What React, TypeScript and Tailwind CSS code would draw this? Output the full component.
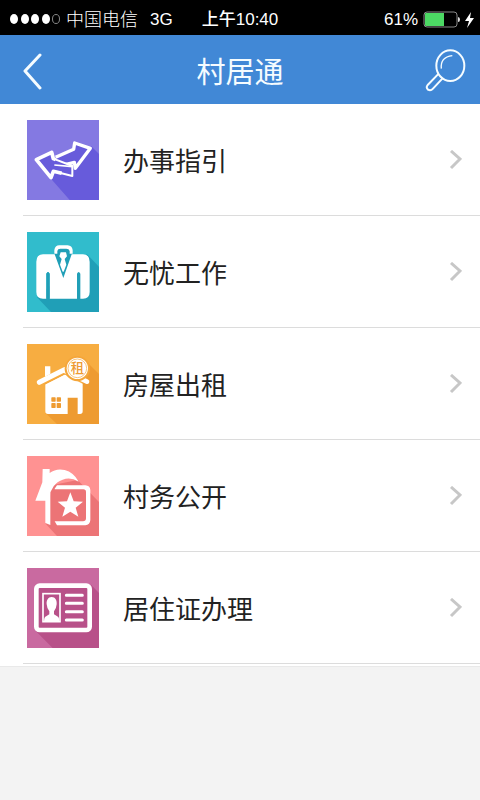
import type { ReactNode } from "react";

type Item = { label: string; art: ReactNode };

const items: Item[] = [
  {
    label: "办事指引",
    art: (
      <>
        <rect x="36" y="30" width="216" height="240" fill="#8479e2" />
        <path d="M228 108L252 132V270H164L106 204L66 152L150 190Z" fill="#675bdb" />
        <path
          d="M122 142L176 118L179 99L226 115L181 175L178 157L120 171"
          fill="#675bdb"
          stroke="#fff"
          strokeWidth="10"
          strokeLinejoin="round"
        />
        <path d="M64 149L110 127L115 146L172 168V198L116 184L108 203Z" fill="#675bdb" stroke="#fff" strokeWidth="6" strokeLinejoin="round" />
        <path
          d="M122 149L115 146L110 127L64 149L108 203L115 184L140 190"
          fill="none"
          stroke="#fff"
          strokeWidth="11"
          strokeLinejoin="round"
        />
        <path d="M118 165L172 170" stroke="#fff" strokeWidth="5" />
      </>
    ),
  },
  {
    label: "无忧工作",
    art: (
      <>
        <rect x="36" y="30" width="216" height="240" fill="#31bccc" />
        <path d="M216 97L252 134V270H108L66 226Z" fill="#209fb7" />
        <path d="M117 98L126 74H165L173 98L145 170Z" fill="#209fb7" />
        <path
          d="M84 97Q64 98 64 119V210Q64 230 84 230H94V155Q99 145 104 155V230H186V155Q191 145 196 155V230H204Q224 230 224 210V119Q224 98 204 97H170L145 168L119 97Z"
          fill="#fff"
        />
        <path d="M94 155Q99 145 104 155V230H94Z" fill="#209fb7" />
        <path d="M118 95V84Q120 70 133 70H158Q171 71 173 84V95H164V87Q162 80 154 80H136Q128 80 127 87V95Z" fill="#fff" />
        <path d="M137 91H153L156 103L149 111L154 128L146 149H143L135 128L140 111L133 103Z" fill="#fff" />
      </>
    ),
  },
  {
    label: "房屋出租",
    art: (
      <>
        <rect x="36" y="30" width="216" height="240" fill="#f7ad41" />
        <path d="M212 80L252 120V270H126L92 238L202 150Z" fill="#ee9b31" />
        <path
          d="M91 151L146 123Q151 121 156 125L203 149V232Q203 240 195 240H188V191H158V240H99Q91 240 91 232Z"
          fill="#fff"
        />
        <path d="M90 128V97H106V120Z" fill="#fff" />
        <path d="M73 145L148 107" stroke="#fff" strokeWidth="15" strokeLinecap="round" />
        <path d="M148 110L216 143" stroke="#fff" strokeWidth="14" strokeLinecap="round" />
        <path d="M88 151L149 120" stroke="#f4a63b" strokeWidth="3" />
        <g fill="#ee9b31">
          <rect x="109" y="190" width="13" height="13" rx="2" />
          <rect x="125" y="190" width="13" height="13" rx="2" />
          <rect x="109" y="207" width="13" height="15" rx="2" />
          <rect x="125" y="207" width="13" height="15" rx="2" />
        </g>
        <circle cx="187" cy="104" r="38" fill="#f4a63b" />
        <circle cx="187" cy="103" r="32" fill="#fff" />
        <circle cx="187" cy="103" r="28" fill="#fff" stroke="#f4a63b" strokeWidth="2" />
        <text
          x="187"
          y="118"
          textAnchor="middle"
          fill="#ee9b31"
          className="font-['Noto_Sans_CJK_SC',sans-serif] text-[40px] font-medium"
        >
          租
        </text>
      </>
    ),
  },
  {
    label: "村务公开",
    art: (
      <>
        <rect x="36" y="30" width="216" height="240" fill="#ff9292" />
        <path d="M188 102L252 168V270H126L92 233L110 118Z" fill="#ec7476" />
        <path
          d="M83 69H104V81Q124 66 149 72Q176 79 191 107Q166 91 143 101Q124 108 116 121L106 139V237L91 231V164H61L82 109Z"
          fill="#fff"
        />
        <path
          d="M119 128L126 118H211Q225 119 226 132V222Q225 237 211 238H126L119 226H204Q213 226 213 217V138Q213 130 205 130H119Z"
          fill="#fff"
        />
        <path d="M166 139L176 166L204 167L182 185L190 212L166 197L142 212L150 185L128 167L156 166Z" fill="#fff" />
      </>
    ),
  },
  {
    label: "居住证办理",
    art: (
      <>
        <rect x="36" y="30" width="216" height="240" fill="#c96aa0" />
        <path d="M228 80L252 105V270H113L63 220Z" fill="#b85189" />
        <rect x="64" y="83" width="160" height="133" rx="10" fill="#b85189" stroke="#fff" strokeWidth="14" />
        <rect x="84" y="107" width="51" height="84" fill="none" stroke="#fff" strokeWidth="5" />
        <path
          d="M110 117C121 117 126 127 125 139Q124 152 117 160V169L130 177Q133 180 133 191H87Q87 180 90 177L103 169V160Q96 152 95 139C94 127 99 117 110 117Z"
          fill="#fff"
        />
        <path d="M154 112H202M154 136H202M154 161H202M154 186H202" stroke="#fff" strokeWidth="9" strokeLinecap="round" />
      </>
    ),
  },
];

function StatusBar() {
  return (
    <div className="grid h-[35px] grid-cols-[1fr_auto_1fr] items-center bg-black px-2 pt-1 text-[17px] leading-5 text-white">
      <div className="flex items-center">
        <svg className="mr-1 h-3 w-[54px]" viewBox="0 0 54 12" aria-hidden="true">
          <g fill="#fff">
            <ellipse cx="6" cy="5" rx="4" ry="5" />
            <ellipse cx="17" cy="5" rx="4" ry="5" />
            <ellipse cx="27" cy="5" rx="4" ry="5" />
            <ellipse cx="38" cy="5" rx="4" ry="5" />
          </g>
          <ellipse cx="48" cy="5" rx="3.5" ry="4.5" fill="none" stroke="#888" />
        </svg>
        <span className="font-['Liberation_Sans','Noto_Sans_CJK_SC',sans-serif] text-[18px] font-light">中国电信</span>
        <span className="ml-3">3G</span>
      </div>
      <span className="font-medium">上午10:40</span>
      <div className="flex items-center justify-end">
        <span>61%</span>
        <svg className="-mr-1 ml-1 h-5 w-[54px]" viewBox="0 0 54 20" aria-hidden="true">
          <rect x="2" y="2" width="33" height="15" rx="3" fill="none" stroke="#8a8a8a" />
          <path d="M4 3H22V16H4Q3 16 3 15V4Q3 3 4 3Z" fill="#4cd964" />
          <path d="M36 7Q38 7 38 9.500Q38 12 36 12Z" fill="#ddd" />
          <path d="M49 2L43 11H47L45 18L52 8H48Z" fill="#fff" />
        </svg>
      </div>
    </div>
  );
}

export default function App() {
  return (
    <div className="min-h-screen bg-[#f3f3f3] font-['Liberation_Sans','Noto_Sans_CJK_SC',sans-serif]">
      <StatusBar />
      <header className="flex h-[69px] items-center justify-between bg-[#4188d6] text-[#f5fcff]">
        <button type="button" aria-label="返回" className="flex h-full w-16 items-center pl-5">
          <svg className="h-10 w-6" viewBox="0 0 24 40" fill="none" stroke="currentColor" strokeWidth="3" strokeLinecap="round" strokeLinejoin="round">
            <path d="M20 5L5 21L20 38" />
          </svg>
        </button>
        <h1 className="font-['Noto_Sans_CJK_SC',sans-serif] text-[29px] leading-10 font-normal">村居通</h1>
        <button type="button" aria-label="搜索" className="flex h-full w-16 items-center justify-end pr-[14px]">
          <svg className="h-[44px] w-[42px]" viewBox="550 145 126 132" fill="none" stroke="currentColor" strokeLinejoin="round">
            <ellipse cx="629" cy="198" rx="42" ry="46" strokeWidth="6" />
            <path d="M602 207Q598 173 635 168" strokeWidth="4" />
            <path d="M594 222L561 256Q555 264 562 270Q570 275 577 267L605 237" strokeWidth="6" />
          </svg>
        </button>
      </header>
      <main className="border-b border-[#e9e9e9] bg-white pb-[2px]">
        <ul className="pl-[23px]">
          {items.map((item) => (
            <li key={item.label} className="border-b border-[#dcdcdc]">
              <a href="#" className="flex items-center pt-4 pr-[18px] pb-[15px] pl-1">
                <svg className="h-20 w-[72px] shrink-0" viewBox="36 30 216 240" preserveAspectRatio="none" aria-hidden="true">
                  {item.art}
                </svg>
                <span className="ml-6 flex-1 font-['Noto_Sans_CJK_SC',sans-serif] text-[26px] leading-10 text-[#222222]">
                  {item.label}
                </span>
                <svg className="h-5 w-[13px]" viewBox="0 0 13 20" fill="none" stroke="#c7c7c7" strokeWidth="3" aria-hidden="true">
                  <path d="M2 1L11 9L2 18" />
                </svg>
              </a>
            </li>
          ))}
        </ul>
      </main>
    </div>
  );
}
